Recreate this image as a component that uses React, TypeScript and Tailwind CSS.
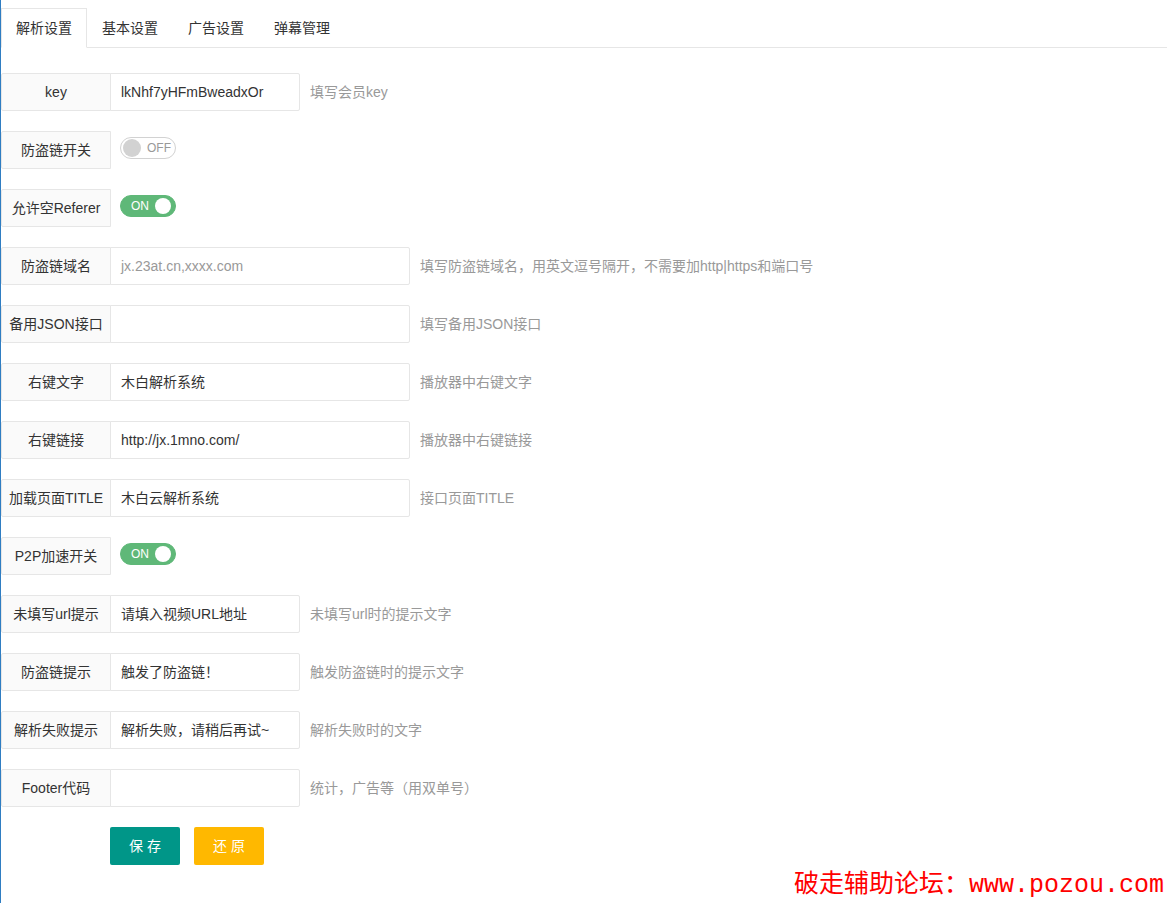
import React from "react";

const FONT = '"Liberation Sans", Arial, "Noto Sans CJK SC", sans-serif';

type Row =
  | { kind: "input"; label: string; value?: string; placeholder?: string; wide?: boolean; hint?: string }
  | { kind: "switch"; label: string; on: boolean };

const rows: Row[] = [
  { kind: "input", label: "key", value: "lkNhf7yHFmBweadxOr", hint: "填写会员key" },
  { kind: "switch", label: "防盗链开关", on: false },
  { kind: "switch", label: "允许空Referer", on: true },
  {
    kind: "input",
    label: "防盗链域名",
    placeholder: "jx.23at.cn,xxxx.com",
    wide: true,
    hint: "填写防盗链域名，用英文逗号隔开，不需要加http|https和端口号",
  },
  { kind: "input", label: "备用JSON接口", value: "", wide: true, hint: "填写备用JSON接口" },
  { kind: "input", label: "右键文字", value: "木白解析系统", wide: true, hint: "播放器中右键文字" },
  { kind: "input", label: "右键链接", value: "http://jx.1mno.com/", wide: true, hint: "播放器中右键链接" },
  { kind: "input", label: "加载页面TITLE", value: "木白云解析系统", wide: true, hint: "接口页面TITLE" },
  { kind: "switch", label: "P2P加速开关", on: true },
  { kind: "input", label: "未填写url提示", value: "请填入视频URL地址", hint: "未填写url时的提示文字" },
  { kind: "input", label: "防盗链提示", value: "触发了防盗链！", hint: "触发防盗链时的提示文字" },
  { kind: "input", label: "解析失败提示", value: "解析失败，请稍后再试~", hint: "解析失败时的文字" },
  { kind: "input", label: "Footer代码", value: "", hint: "统计，广告等（用双单号）" },
];

function Switch({ on }: { on: boolean }) {
  if (on) {
    return (
      <div className="relative ml-[9px] mt-[6px] h-[22px] w-[56px] rounded-[20px] border border-[#5fb878] bg-[#5fb878]">
        <span className="absolute left-[10px] top-0 text-[12px] leading-[20px] text-white">ON</span>
        <span className="absolute right-[4px] top-[2px] h-[16px] w-[16px] rounded-full bg-white" />
      </div>
    );
  }
  return (
    <div className="relative ml-[9px] mt-[6px] h-[22px] w-[56px] rounded-[20px] border border-[#d2d2d2] bg-white">
      <span className="absolute left-[2px] top-[1px] h-[18px] w-[18px] rounded-full bg-[#d2d2d2]" />
      <span className="absolute left-[26px] top-0 text-[12px] leading-[20px] text-[#999]">OFF</span>
    </div>
  );
}

export default function App() {
  const tabs = ["解析设置", "基本设置", "广告设置", "弹幕管理"];
  return (
    <div
      className="relative h-[903px] w-full overflow-hidden border-l border-[#2f7dc2] bg-white text-[14px] text-[#333]"
      style={{ fontFamily: FONT }}
    >
      {/* tabs */}
      <div className="mt-[8px] flex h-[40px] border-b border-[#e6e6e6]">
        {tabs.map((t, i) =>
          i === 0 ? (
            <div
              key={t}
              className="flex h-[40px] shrink-0 items-center border-x border-t border-b border-[#e6e6e6] border-b-white bg-white px-[14px] leading-[20px]"
            >
              {t}
            </div>
          ) : (
            <div key={t} className="flex h-[39px] shrink-0 items-center px-[15px] leading-[20px]">
              {t}
            </div>
          )
        )}
      </div>

      {/* form */}
      <div className="flex flex-col gap-[20px] pt-[25px]">
        {rows.map((r) => (
          <div key={r.label} className="flex h-[38px] items-start">
            <div className="flex h-[38px] w-[110px] shrink-0 items-center justify-center whitespace-nowrap rounded-l-[2px] border border-[#e6e6e6] bg-[#fafafa] leading-[20px] text-[#333]">
              {r.label}
            </div>
            {r.kind === "switch" ? (
              <Switch on={r.on} />
            ) : (
              <>
                <div
                  className={
                    (r.wide ? "w-[300px] " : "w-[190px] ") +
                    "-ml-px flex h-[38px] shrink-0 items-center whitespace-nowrap rounded-r-[2px] border border-[#e6e6e6] bg-white px-[10px] leading-[20px]"
                  }
                >
                  {r.placeholder ? (
                    <span className="text-[#999]">{r.placeholder}</span>
                  ) : (
                    <span className="text-[#333]">{r.value}</span>
                  )}
                </div>
                {r.hint && (
                  <div className="ml-[10px] flex h-[38px] items-center whitespace-nowrap leading-[20px] text-[#999]">
                    {r.hint}
                  </div>
                )}
              </>
            )}
          </div>
        ))}

        <div className="flex h-[38px] items-start pl-[109px]">
          <button className="h-[38px] w-[70px] rounded-[2px] bg-[#009688] text-[14px] text-white">保 存</button>
          <button className="ml-[14px] h-[38px] w-[70px] rounded-[2px] bg-[#ffb800] text-[14px] text-white">还 原</button>
        </div>
      </div>

      {/* watermark */}
      <div
        className="absolute bottom-[5px] right-[3px] whitespace-nowrap text-[25px] leading-[25px] text-[#ff0000]"
        style={{ fontFamily: '"Liberation Mono", "Noto Sans CJK SC", monospace' }}
      >
        破走辅助论坛：www.pozou.com
      </div>
    </div>
  );
}
